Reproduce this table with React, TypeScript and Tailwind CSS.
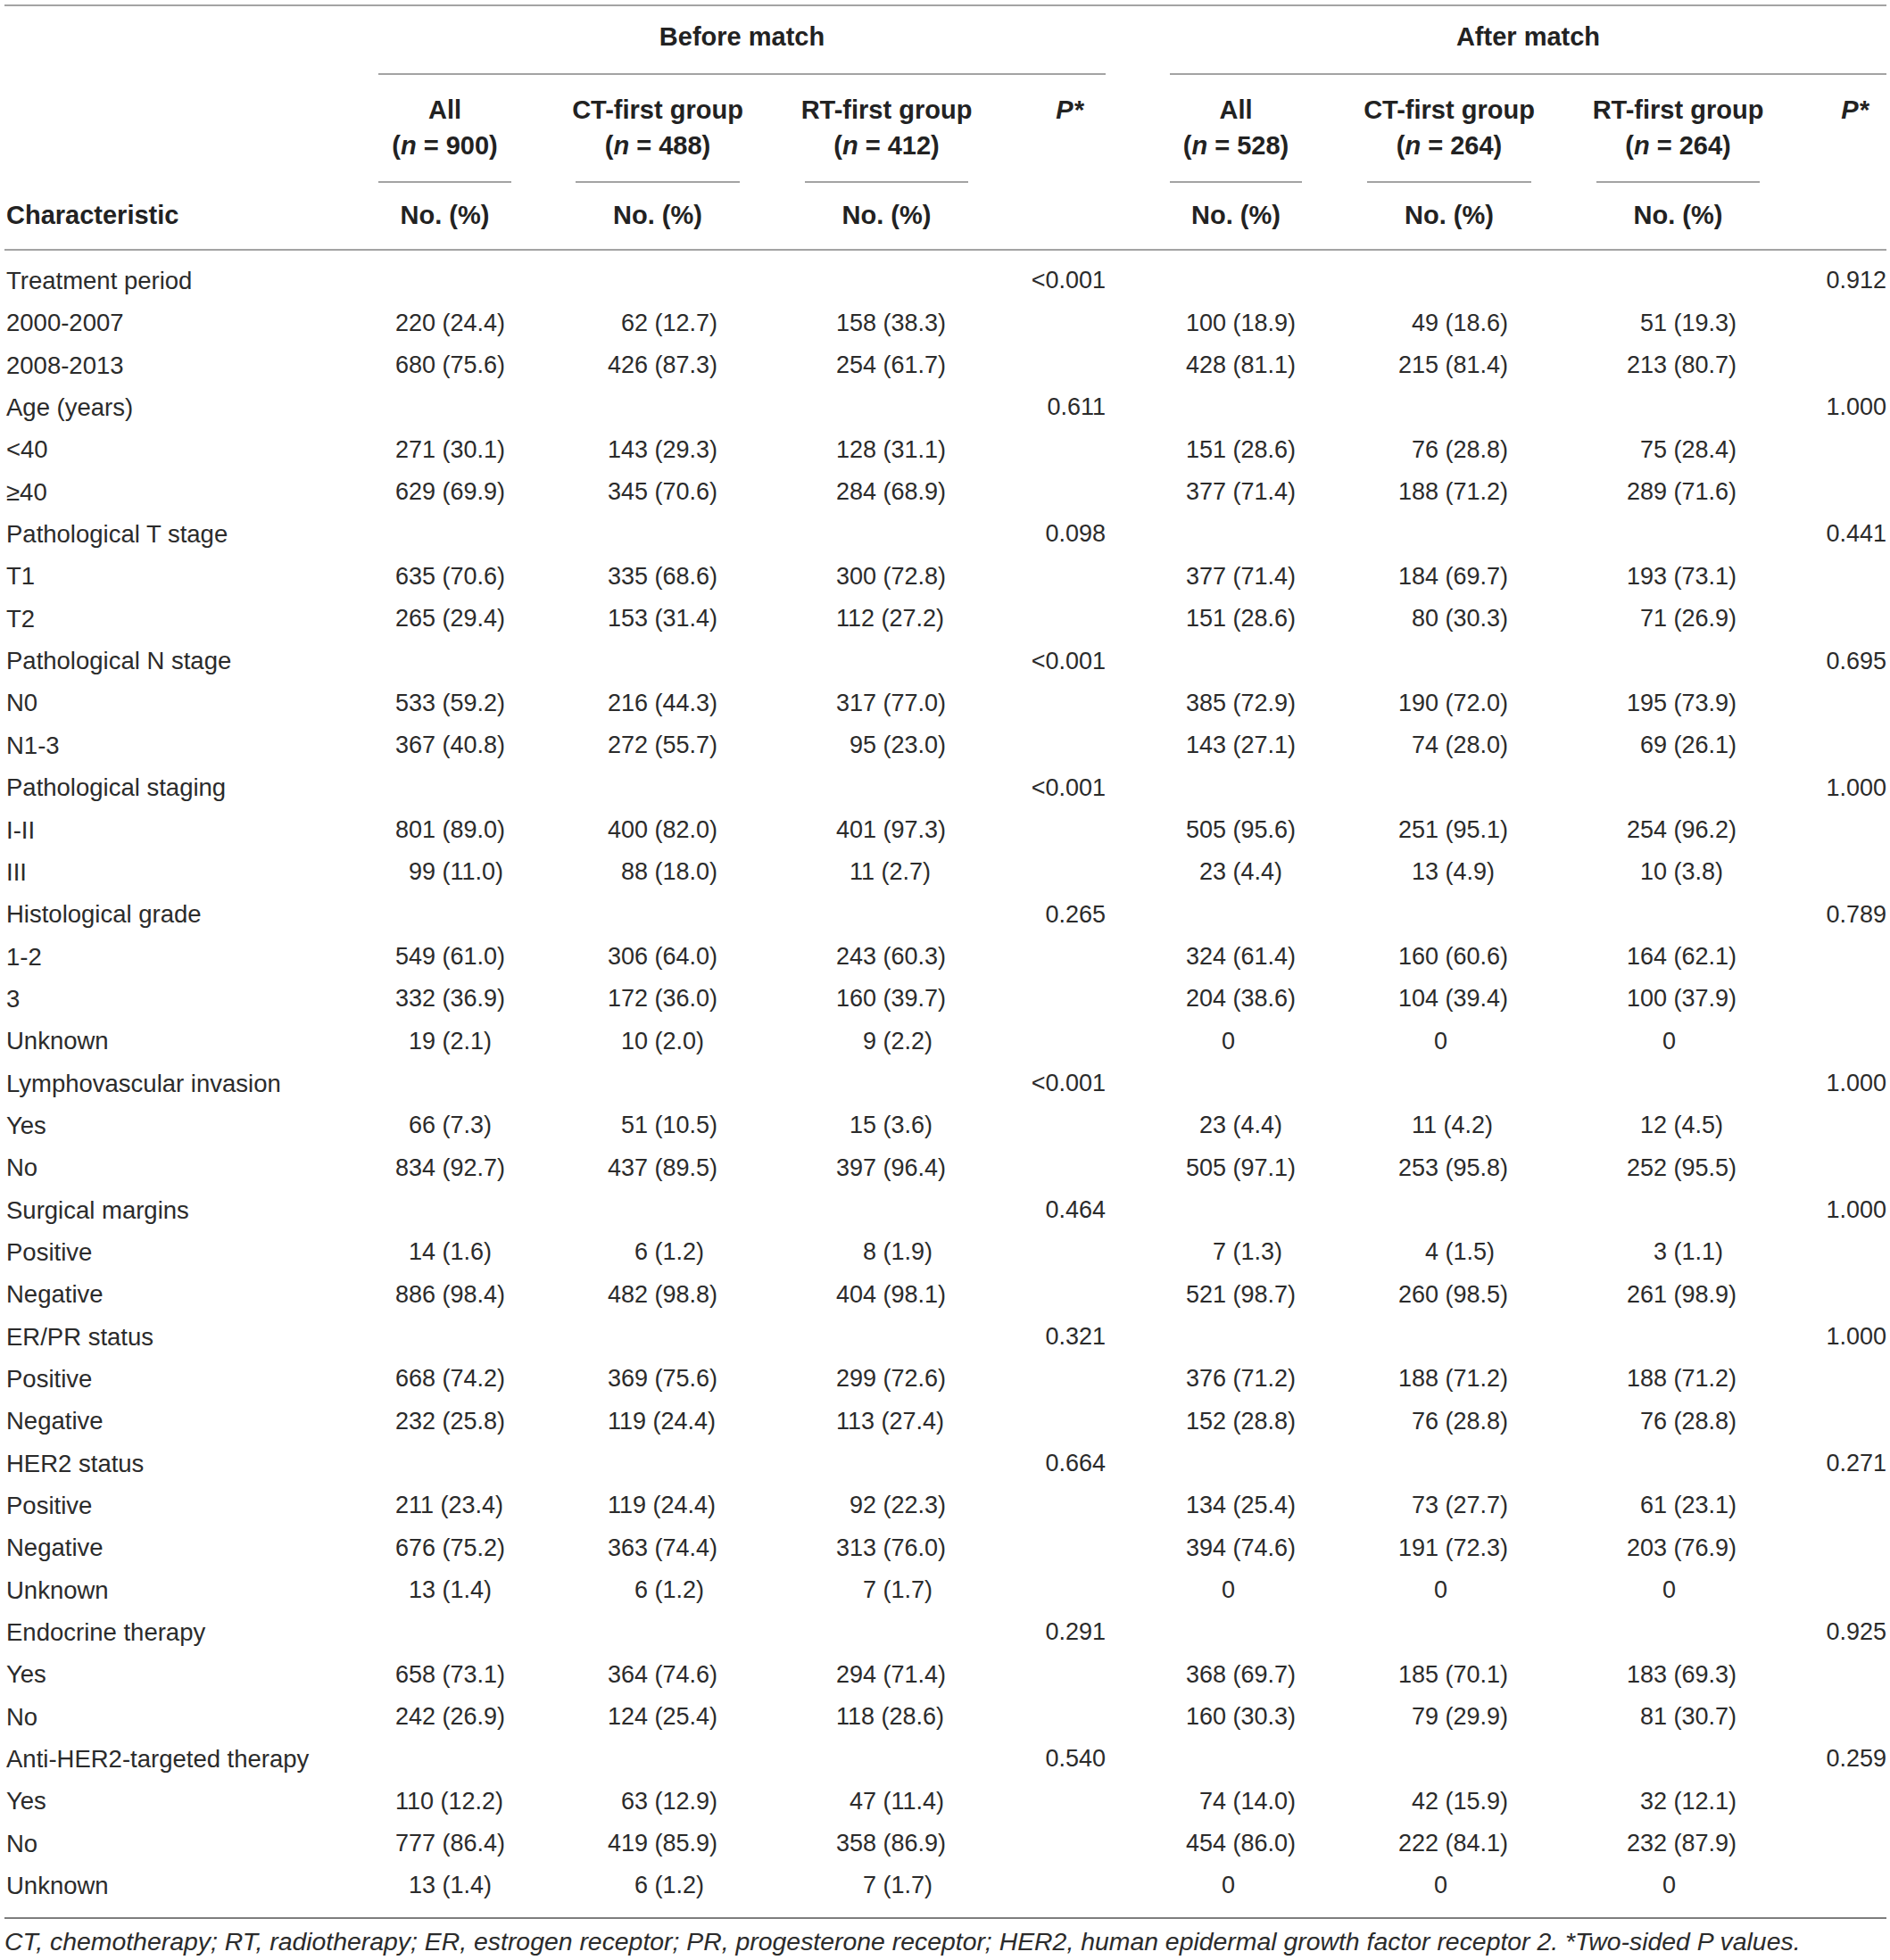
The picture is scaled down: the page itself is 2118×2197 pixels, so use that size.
import React from 'react'

type Row = {
  label: string
  heading?: boolean
  cells?: string[]
  pBefore?: string
  pAfter?: string
}

const rows: Row[] = [
  { label: 'Treatment period', heading: true, pBefore: '<0.001', pAfter: '0.912' },
  { label: '2000-2007', cells: ['220 (24.4)', '62 (12.7)', '158 (38.3)', '100 (18.9)', '49 (18.6)', '51 (19.3)'] },
  { label: '2008-2013', cells: ['680 (75.6)', '426 (87.3)', '254 (61.7)', '428 (81.1)', '215 (81.4)', '213 (80.7)'] },
  { label: 'Age (years)', heading: true, pBefore: '0.611', pAfter: '1.000' },
  { label: '<40', cells: ['271 (30.1)', '143 (29.3)', '128 (31.1)', '151 (28.6)', '76 (28.8)', '75 (28.4)'] },
  { label: '≥40', cells: ['629 (69.9)', '345 (70.6)', '284 (68.9)', '377 (71.4)', '188 (71.2)', '289 (71.6)'] },
  { label: 'Pathological T stage', heading: true, pBefore: '0.098', pAfter: '0.441' },
  { label: 'T1', cells: ['635 (70.6)', '335 (68.6)', '300 (72.8)', '377 (71.4)', '184 (69.7)', '193 (73.1)'] },
  { label: 'T2', cells: ['265 (29.4)', '153 (31.4)', '112 (27.2)', '151 (28.6)', '80 (30.3)', '71 (26.9)'] },
  { label: 'Pathological N stage', heading: true, pBefore: '<0.001', pAfter: '0.695' },
  { label: 'N0', cells: ['533 (59.2)', '216 (44.3)', '317 (77.0)', '385 (72.9)', '190 (72.0)', '195 (73.9)'] },
  { label: 'N1-3', cells: ['367 (40.8)', '272 (55.7)', '95 (23.0)', '143 (27.1)', '74 (28.0)', '69 (26.1)'] },
  { label: 'Pathological staging', heading: true, pBefore: '<0.001', pAfter: '1.000' },
  { label: 'I-II', cells: ['801 (89.0)', '400 (82.0)', '401 (97.3)', '505 (95.6)', '251 (95.1)', '254 (96.2)'] },
  { label: 'III', cells: ['99 (11.0)', '88 (18.0)', '11 (2.7)', '23 (4.4)', '13 (4.9)', '10 (3.8)'] },
  { label: 'Histological grade', heading: true, pBefore: '0.265', pAfter: '0.789' },
  { label: '1-2', cells: ['549 (61.0)', '306 (64.0)', '243 (60.3)', '324 (61.4)', '160 (60.6)', '164 (62.1)'] },
  { label: '3', cells: ['332 (36.9)', '172 (36.0)', '160 (39.7)', '204 (38.6)', '104 (39.4)', '100 (37.9)'] },
  { label: 'Unknown', cells: ['19 (2.1)', '10 (2.0)', '9 (2.2)', '0', '0', '0'] },
  { label: 'Lymphovascular invasion', heading: true, pBefore: '<0.001', pAfter: '1.000' },
  { label: 'Yes', cells: ['66 (7.3)', '51 (10.5)', '15 (3.6)', '23 (4.4)', '11 (4.2)', '12 (4.5)'] },
  { label: 'No', cells: ['834 (92.7)', '437 (89.5)', '397 (96.4)', '505 (97.1)', '253 (95.8)', '252 (95.5)'] },
  { label: 'Surgical margins', heading: true, pBefore: '0.464', pAfter: '1.000' },
  { label: 'Positive', cells: ['14 (1.6)', '6 (1.2)', '8 (1.9)', '7 (1.3)', '4 (1.5)', '3 (1.1)'] },
  { label: 'Negative', cells: ['886 (98.4)', '482 (98.8)', '404 (98.1)', '521 (98.7)', '260 (98.5)', '261 (98.9)'] },
  { label: 'ER/PR status', heading: true, pBefore: '0.321', pAfter: '1.000' },
  { label: 'Positive', cells: ['668 (74.2)', '369 (75.6)', '299 (72.6)', '376 (71.2)', '188 (71.2)', '188 (71.2)'] },
  { label: 'Negative', cells: ['232 (25.8)', '119 (24.4)', '113 (27.4)', '152 (28.8)', '76 (28.8)', '76 (28.8)'] },
  { label: 'HER2 status', heading: true, pBefore: '0.664', pAfter: '0.271' },
  { label: 'Positive', cells: ['211 (23.4)', '119 (24.4)', '92 (22.3)', '134 (25.4)', '73 (27.7)', '61 (23.1)'] },
  { label: 'Negative', cells: ['676 (75.2)', '363 (74.4)', '313 (76.0)', '394 (74.6)', '191 (72.3)', '203 (76.9)'] },
  { label: 'Unknown', cells: ['13 (1.4)', '6 (1.2)', '7 (1.7)', '0', '0', '0'] },
  { label: 'Endocrine therapy', heading: true, pBefore: '0.291', pAfter: '0.925' },
  { label: 'Yes', cells: ['658 (73.1)', '364 (74.6)', '294 (71.4)', '368 (69.7)', '185 (70.1)', '183 (69.3)'] },
  { label: 'No', cells: ['242 (26.9)', '124 (25.4)', '118 (28.6)', '160 (30.3)', '79 (29.9)', '81 (30.7)'] },
  { label: 'Anti-HER2-targeted therapy', heading: true, pBefore: '0.540', pAfter: '0.259' },
  { label: 'Yes', cells: ['110 (12.2)', '63 (12.9)', '47 (11.4)', '74 (14.0)', '42 (15.9)', '32 (12.1)'] },
  { label: 'No', cells: ['777 (86.4)', '419 (85.9)', '358 (86.9)', '454 (86.0)', '222 (84.1)', '232 (87.9)'] },
  { label: 'Unknown', cells: ['13 (1.4)', '6 (1.2)', '7 (1.7)', '0', '0', '0'] },
]

const grid =
  'grid grid-cols-[419px_221px_257px_183px_154px_72px_221px_257px_183px_142px]'

// left offset of the figures inside each of the six count columns
const colPad = ['pl-[19px]', 'pl-[36px]', 'pl-[35px]', 'pl-[18px]', 'pl-[35px]', 'pl-[34px]']

// counts are lined up as if padded to three digits
const digitPad: Record<number, string> = { 0: '', 1: 'pl-[15px]', 2: 'pl-[30px]' }

function Count({ value }: { value: string }) {
  if (value === '0') return <span className="pl-[40px]">0</span>
  const digits = value.split(' ')[0].length
  return <span className={digitPad[3 - digits]}>{value}</span>
}

function DataRow({ row }: { row: Row }) {
  const c = row.cells ?? []
  return (
    <div className={`${grid} h-[47.35px] items-center whitespace-nowrap`}>
      <div className="pl-[2px] text-[27.5px]">{row.label}</div>
      {[0, 1, 2].map((i) => (
        <div key={i} className={colPad[i]}>
          {c[i] && <Count value={c[i]} />}
        </div>
      ))}
      <div className="text-right">{row.pBefore}</div>
      <div />
      {[3, 4, 5].map((i) => (
        <div key={i} className={colPad[i]}>
          {c[i] && <Count value={c[i]} />}
        </div>
      ))}
      <div className="text-right">{row.pAfter}</div>
    </div>
  )
}

function GroupHead({ n, total }: { n: string; total: string }) {
  return (
    <>
      <div className="-mx-[20px]">{n}</div>
      <div>
        (<i>n</i> = {total})
      </div>
    </>
  )
}

export default function App() {
  const line = 'border-[#a3a3a3]'
  const sub = `border-b-2 ${line} pt-[19px] pb-[20px] text-center whitespace-nowrap`
  return (
    <div className="w-[2118px] min-h-[2197px] bg-white pt-[5px] pl-[5px] text-[#2b2b2b] font-['Liberation_Sans',Arial,sans-serif]">
      <div className={`w-[2109px] border-t-2 ${line}`}>
        {/* group headings */}
        <div className={`${grid} text-[29px] font-bold text-[#222]`}>
          <div />
          <div className={`col-span-4 h-[77px] border-b-2 ${line} pt-[17px] text-center leading-[34px]`}>
            Before match
          </div>
          <div />
          <div className={`col-span-4 h-[77px] border-b-2 ${line} pt-[17px] text-center leading-[34px]`}>
            After match
          </div>
        </div>

        {/* column headings */}
        <div className={`${grid} text-[29px] font-bold leading-[40px] text-[#222]`}>
          <div />
          <div className={`w-[149px] ${sub}`}>
            <GroupHead n="All" total="900" />
          </div>
          <div className={`w-[184px] ${sub}`}>
            <GroupHead n="CT-first group" total="488" />
          </div>
          <div className={`w-[183px] ${sub}`}>
            <GroupHead n="RT-first group" total="412" />
          </div>
          <div className="pt-[19px] pr-[25px] text-right italic">P*</div>
          <div />
          <div className={`w-[148px] ${sub}`}>
            <GroupHead n="All" total="528" />
          </div>
          <div className={`w-[184px] ${sub}`}>
            <GroupHead n="CT-first group" total="264" />
          </div>
          <div className={`w-[183px] ${sub}`}>
            <GroupHead n="RT-first group" total="264" />
          </div>
          <div className="pt-[19px] pr-[20px] text-right italic">P*</div>
        </div>

        <div className={`${grid} h-[76px] items-center border-b-2 ${line} text-[29px] font-bold text-[#222]`}>
          <div className="pl-[2px]">Characteristic</div>
          <div className="w-[149px] text-center">No. (%)</div>
          <div className="w-[184px] text-center">No. (%)</div>
          <div className="w-[183px] text-center">No. (%)</div>
          <div />
          <div />
          <div className="w-[148px] text-center">No. (%)</div>
          <div className="w-[184px] text-center">No. (%)</div>
          <div className="w-[183px] text-center">No. (%)</div>
          <div />
        </div>

        {/* body */}
        <div className="border-b-2 border-[#7d7d7d] pt-[10px] pb-[12px] text-[27px]">
          {rows.map((r, i) => (
            <DataRow key={i} row={r} />
          ))}
        </div>

        <p className="whitespace-nowrap text-[28.4px] italic leading-[50px]">
          CT, chemotherapy; RT, radiotherapy; ER, estrogen receptor; PR, progesterone receptor; HER2, human
          epidermal growth factor receptor 2. *Two-sided P values.
        </p>
      </div>
    </div>
  )
}
